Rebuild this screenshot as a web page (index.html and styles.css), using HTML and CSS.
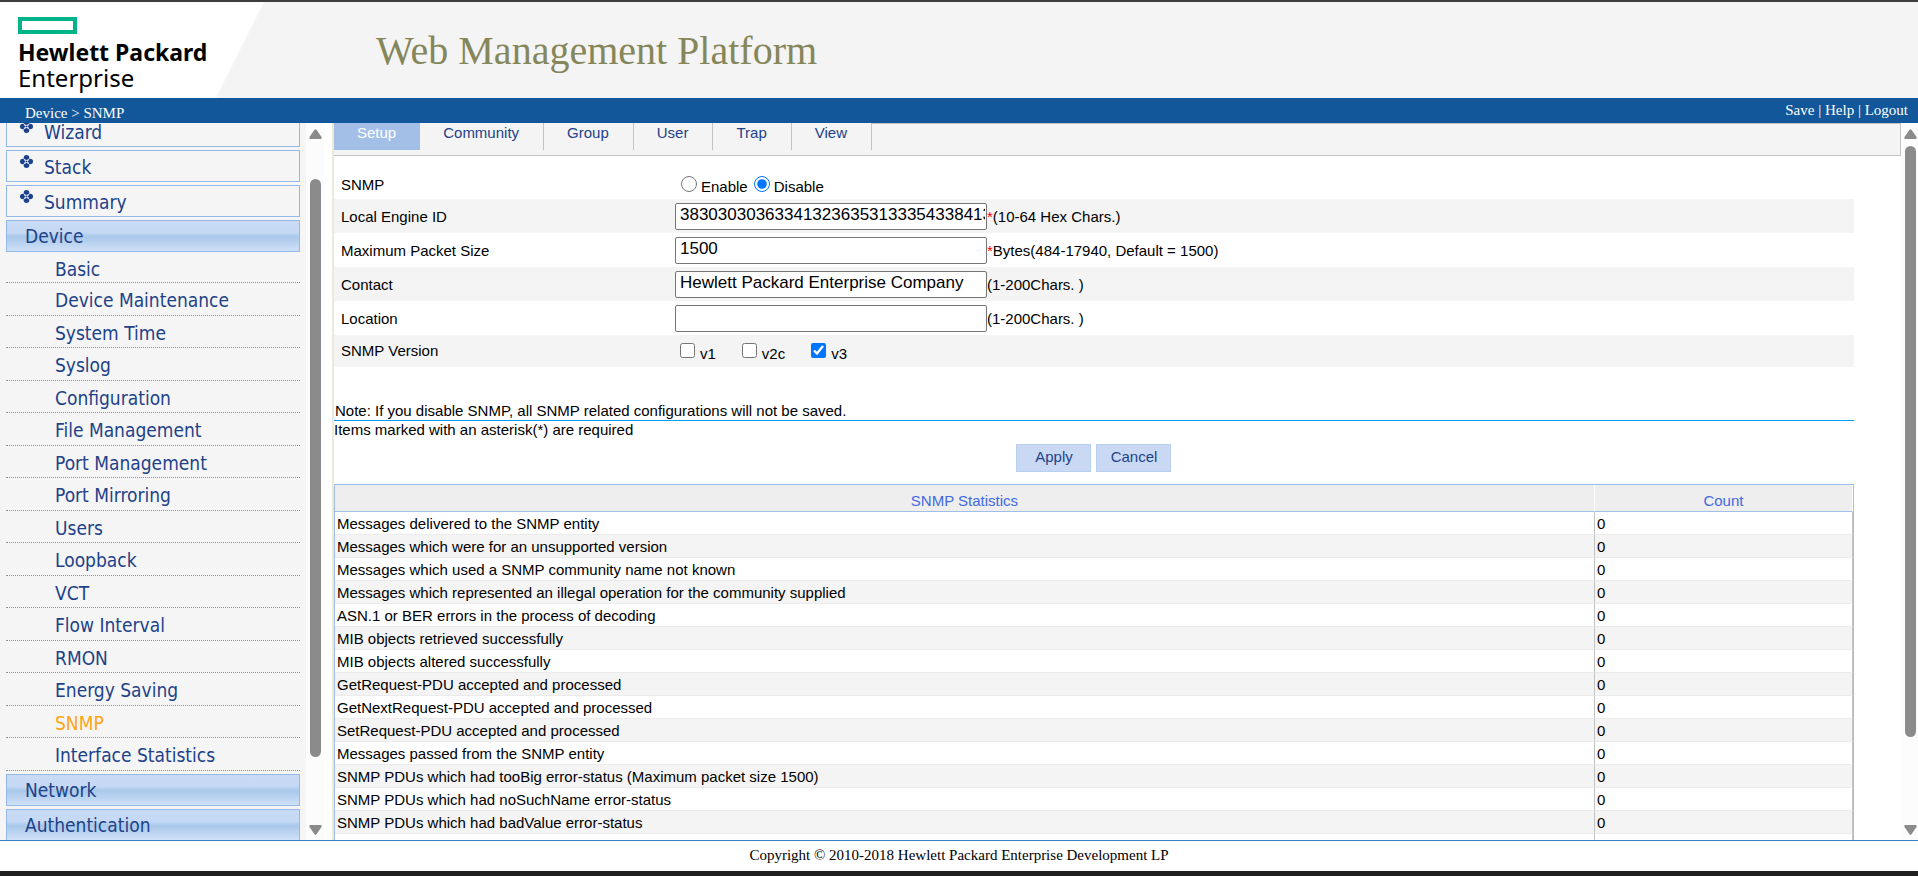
FILE: index.html
```html
<!DOCTYPE html>
<html lang="en">
<head>
<meta charset="utf-8">
<title>Web Management Platform</title>
<link rel="stylesheet" href="styles.css">
</head>
<body>
<svg class="symbols" aria-hidden="true">
  <symbol id="diamond" viewBox="0 0 14 14">
    <g fill="#1d4289">
      <circle cx="7" cy="3" r="3"/>
      <circle cx="7" cy="11" r="3"/>
      <circle cx="3" cy="7" r="3"/>
      <circle cx="11" cy="7" r="3"/>
    </g>
    <path stroke="#e3e9f3" stroke-width="1.600" fill="none" d="M4.500 4.500 9.500 9.500M9.500 4.500 4.500 9.500"/>
    <path fill="#1d4289" d="M7 5.800 8.200 7 7 8.200 5.800 7Z"/>
  </symbol>
  <symbol id="arrow-up" viewBox="0 0 13 10">
    <path fill="#8b8b8b" d="M5.500 0.800Q6.500-0.300 7.500 0.800L12.500 8Q13.200 10 11.500 10H1.500Q-0.200 10 0.500 8Z"/>
  </symbol>
  <symbol id="arrow-down" viewBox="0 0 13 10">
    <path fill="#8b8b8b" d="M5.500 9.200Q6.500 10.300 7.500 9.200L12.500 2Q13.200 0 11.500 0H1.500Q-0.200 0 0.500 2Z"/>
  </symbol>
</svg>
<header class="banner">
  <div class="logo">
    <svg class="logo-mark" viewBox="0 0 59 17"><rect x="2" y="2" width="55" height="13" fill="none" stroke="#01b388" stroke-width="4"/></svg>
    <span class="logo-bold">Hewlett Packard</span>
    <span class="logo-thin">Enterprise</span>
  </div>
  <h1 class="title">Web Management Platform</h1>
</header>
<div class="topbar">
  <div class="crumbs">Device &gt; SNMP</div>
  <div class="actions"><a href="#">Save</a> | <a href="#">Help</a> | <a href="#">Logout</a></div>
</div>
<div class="frames">
  <nav class="sidebar">
    <div class="menu">
      <a class="top" href="#"><svg class="bullet"><use href="#diamond"/></svg>Wizard</a>
      <a class="top" href="#"><svg class="bullet"><use href="#diamond"/></svg>Stack</a>
      <a class="top" href="#"><svg class="bullet"><use href="#diamond"/></svg>Summary</a>
      <a class="group" href="#">Device</a>
      <ul class="items">
        <li><a href="#">Basic</a></li>
        <li><a href="#">Device Maintenance</a></li>
        <li><a href="#">System Time</a></li>
        <li><a href="#">Syslog</a></li>
        <li><a href="#">Configuration</a></li>
        <li><a href="#">File Management</a></li>
        <li><a href="#">Port Management</a></li>
        <li><a href="#">Port Mirroring</a></li>
        <li><a href="#">Users</a></li>
        <li><a href="#">Loopback</a></li>
        <li><a href="#">VCT</a></li>
        <li><a href="#">Flow Interval</a></li>
        <li><a href="#">RMON</a></li>
        <li><a href="#">Energy Saving</a></li>
        <li><a class="current" href="#">SNMP</a></li>
        <li><a href="#">Interface Statistics</a></li>
      </ul>
      <a class="group" href="#">Network</a>
      <a class="group" href="#">Authentication</a>
    </div>
  </nav>
  <div class="scrollbar side-scroll">
    <svg class="arrow"><use href="#arrow-up"/></svg>
    <div class="track"><div class="thumb"></div></div>
    <svg class="arrow"><use href="#arrow-down"/></svg>
  </div>
  <main class="content">
    <div class="tabs">
      <a class="tab active" href="#">Setup</a><a class="tab" href="#">Community</a><a class="tab" href="#">Group</a><a class="tab" href="#">User</a><a class="tab" href="#">Trap</a><a class="tab" href="#">View</a><span class="tab-rest"></span>
    </div>
    <form class="form">
      <div class="row first"><span class="label">SNMP</span><span class="field choices">
        <input type="radio" name="snmp" id="enable"><label for="enable">Enable</label>
        <input type="radio" name="snmp" id="disable" checked><label for="disable">Disable</label></span></div>
      <div class="row shade"><label class="label" for="engine">Local Engine ID</label><span class="field"><input class="text" type="text" id="engine" value="383030303633413236353133354338413"><b class="star">*</b>(10-64 Hex Chars.)</span></div>
      <div class="row"><label class="label" for="packet">Maximum Packet Size</label><span class="field"><input class="text" type="text" id="packet" value="1500"><b class="star">*</b>Bytes(484-17940, Default = 1500)</span></div>
      <div class="row shade"><label class="label" for="contact">Contact</label><span class="field"><input class="text" type="text" id="contact" value="Hewlett Packard Enterprise Company">(1-200Chars. )</span></div>
      <div class="row"><label class="label" for="location">Location</label><span class="field"><input class="text" type="text" id="location">(1-200Chars. )</span></div>
      <div class="row shade versions"><span class="label">SNMP Version</span><span class="field choices">
        <input type="checkbox" id="v1"><label for="v1">v1</label>
        <input type="checkbox" id="v2c"><label for="v2c">v2c</label>
        <input type="checkbox" id="v3" checked><label for="v3">v3</label></span></div>
      <p class="note">Note: If you disable SNMP, all SNMP related configurations will not be saved.</p>
      <p class="required">Items marked with an asterisk(*) are required</p>
      <div class="buttons"><button type="button">Apply</button><button type="button">Cancel</button></div>
    </form>
    <table class="stats">
      <thead><tr><th class="name">SNMP Statistics</th><th>Count</th></tr></thead>
      <tbody>
        <tr><td>Messages delivered to the SNMP entity</td><td>0</td></tr>
        <tr><td>Messages which were for an unsupported version</td><td>0</td></tr>
        <tr><td>Messages which used a SNMP community name not known</td><td>0</td></tr>
        <tr><td>Messages which represented an illegal operation for the community supplied</td><td>0</td></tr>
        <tr><td>ASN.1 or BER errors in the process of decoding</td><td>0</td></tr>
        <tr><td>MIB objects retrieved successfully</td><td>0</td></tr>
        <tr><td>MIB objects altered successfully</td><td>0</td></tr>
        <tr><td>GetRequest-PDU accepted and processed</td><td>0</td></tr>
        <tr><td>GetNextRequest-PDU accepted and processed</td><td>0</td></tr>
        <tr><td>SetRequest-PDU accepted and processed</td><td>0</td></tr>
        <tr><td>Messages passed from the SNMP entity</td><td>0</td></tr>
        <tr><td>SNMP PDUs which had tooBig error-status (Maximum packet size 1500)</td><td>0</td></tr>
        <tr><td>SNMP PDUs which had noSuchName error-status</td><td>0</td></tr>
        <tr><td>SNMP PDUs which had badValue error-status</td><td>0</td></tr>
        <tr><td></td><td></td></tr>
      </tbody>
    </table>
  </main>
  <div class="scrollbar main-scroll">
    <svg class="arrow"><use href="#arrow-up"/></svg>
    <div class="track"><div class="thumb"></div></div>
    <svg class="arrow"><use href="#arrow-down"/></svg>
  </div>
</div>
<footer class="footer">Copyright © 2010-2018 Hewlett Packard Enterprise Development LP</footer>
</body>
</html>
```
FILE: styles.css
```css
* { box-sizing: border-box; }

body {
  margin: 0;
  height: 100vh;
  display: flex;
  flex-direction: column;
  overflow: hidden;
  background: #fff;
  color: #000;
  font: 15px/17px "Liberation Sans", Arial, sans-serif;
}

a { color: inherit; text-decoration: none; }
.symbols { display: none; }

/* Banner */
.banner {
  flex: none;
  display: flex;
  align-items: flex-start;
  height: 98px;
  border-top: 2px solid #3e3c3d;
  background: #f4f4f4;
}
.logo {
  display: flex;
  flex-direction: column;
  width: 264px;
  height: 96px;
  padding: 15px 0 0 18px;
  background: #fff;
  clip-path: polygon(0 0, 100% 0, 216px 100%, 0 100%);
  font-family: "Noto Sans", sans-serif;
  font-size: 23px;
  line-height: 25px;
}
.logo-mark { width: 59px; height: 17px; margin-bottom: 6px; }
.logo-bold { font-weight: 700; }
.logo-thin { font-size: 24px; }
.title {
  margin: 26px 0 0 112px;
  color: #85865a;
  font: 400 40px/46px "Liberation Serif", "Times New Roman", serif;
}

/* Blue bar */
.topbar {
  flex: none;
  display: flex;
  justify-content: space-between;
  height: 25px;
  padding: 0 10px 0 25px;
  background: #125799;
  color: #fff;
  font: 15px/24px "Liberation Serif", "Times New Roman", serif;
}
.crumbs { padding-top: 3px; }

.frames { flex: 1; min-height: 0; display: flex; overflow: hidden; }

/* Sidebar */
.sidebar {
  flex: none;
  width: 306px;
  padding: 0 6px;
  overflow: hidden;
  background: #f5f5f5;
  color: #1d4289;
  font: 19px/30px "DejaVu Sans Condensed", "Noto Sans", Tahoma, sans-serif;
}
.menu { margin-top: -11px; }
.top, .group {
  display: flex;
  height: 32px;
  margin-top: 3px;
  border: 1px solid #94b9e6;
}
.top { padding-left: 13px; line-height: 32px; }
.bullet { width: 13px; height: 13px; margin: 4px 11px 0 0; }
.group {
  padding-left: 18px;
  background: linear-gradient(#c9dbf4 0, #c5d9f5 38%, #a9c8ea 52%, #b4cfef 66%, #cfe0f6 100%);
}
.items { margin: 0; padding: 0; list-style: none; line-height: 34px; }
.items li {
  height: 32px;
  padding-left: 49px;
  border-bottom: 1px dotted #8f8f8f;
}
.items li:nth-child(even) { height: 33px; }
.items li:first-child { height: 31px; }
.current { color: #ffa514; }

/* Scrollbars */
.scrollbar {
  flex: none;
  display: flex;
  flex-direction: column;
  align-items: center;
  padding: 6px 0 5px;
  background: #fcfcfc;
}
.side-scroll { width: 18px; margin-right: 8px; }
.main-scroll { width: 17px; padding-left: 2px; }
.arrow { flex: none; width: 13px; height: 10px; }
.track { flex: 1; width: 11px; padding: 7px 0; }
.thumb { border-radius: 6px; background: #8b8b8b; }
.side-scroll .thumb { height: 86%; margin-top: 33px; }
.main-scroll .thumb { height: 88%; }

/* Content */
.content {
  flex: 1;
  min-width: 0;
  overflow: hidden;
  border-left: 2px solid #ece9d8;
}
.tabs {
  display: flex;
  height: 33px;
  border-bottom: 1px solid #c3c3c3;
  border-right: 1px solid #c3c3c3;
  background: #f4f4f4;
  color: #1d4289;
}
.tab {
  height: 27px;
  padding: 1px 24px 0 23px;
  border-right: 1px solid #c3c3c3;
}
.tab.active { border-right: 0; background: #a3bfe8; color: #fff; }
.tab-rest { flex: 1; border-top: 1px solid #c3c3c3; }

.form { width: 97%; padding-top: 9px; }
.row { display: flex; align-items: center; height: 34px; }
.shade { background: #f4f4f4; }
.label { width: 341px; padding-left: 7px; }
.first { padding-top: 8px; }
.first .label { padding-bottom: 4px; }
.versions { height: 32px; }
.versions .label { padding-bottom: 2px; }
.field { display: flex; align-items: center; }
.text {
  width: 312px;
  height: 27px;
  padding: 0 1px 2px 4px;
  border: 1px solid #767676;
  border-radius: 2px;
  background: #fff;
  color: #000;
  font: 17px/19px "Liberation Sans", Arial, sans-serif;
}
.star { color: #f00; font-weight: 400; }
.choices { padding-left: 5px; }
.choices input { width: 15px; height: 15px; margin: 0 5px 2px 0; accent-color: #0075ff; }
.choices input[type="radio"] { width: 16px; height: 16px; margin: 0 4px 4px 1px; }
.choices label { margin-right: 5px; }
.versions .choices label { margin-right: 26px; padding-top: 4px; }

.note, .required { margin: 0; }
.note { padding: 35px 0 1px 1px; border-bottom: 1px solid #00a0f8; }
.buttons { display: flex; justify-content: center; gap: 5px; padding: 6px 0 12px; }
.buttons button {
  width: 75px;
  height: 28px;
  padding: 0 0 3px;
  border: 1px solid #b9cfee;
  background: #cad9f3;
  color: #1d4289;
  font: 15px/17px "Liberation Sans", Arial, sans-serif;
}

.stats {
  width: 97%;
  border: 1px solid #a0bfe8;
  border-collapse: separate;
  border-spacing: 0;
}
.stats th {
  height: 27px;
  padding: 4px 0 0;
  border-right: 1px solid #fff;
  border-bottom: 1px solid #a0bfe8;
  background: #eee;
  color: #4169e1;
  font-weight: 400;
}
.stats .name { width: 83%; }
.stats td {
  height: 23px;
  padding: 2px;
  border-right: 1px solid #c3c3c3;
  border-bottom: 1px solid #ebebeb;
}
.stats tbody tr:nth-child(even) { background: #f4f4f4; }

.footer {
  flex: none;
  height: 36px;
  padding-top: 6px;
  border-top: 1px solid #3a7fc0;
  border-bottom: 5px solid #202020;
  text-align: center;
  font: 15px/17px "Liberation Serif", "Times New Roman", serif;
}
```
